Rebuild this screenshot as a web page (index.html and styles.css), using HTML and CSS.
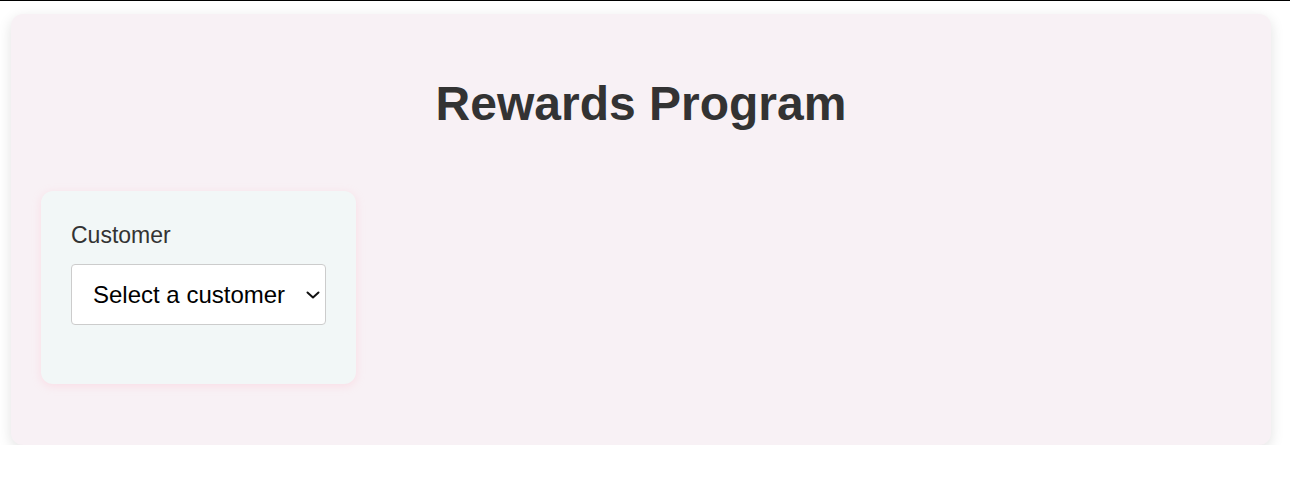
FILE: index.html
```html
<!DOCTYPE html>
<html lang="en">
<head>
<meta charset="utf-8">
<title>Rewards Program</title>
<link rel="stylesheet" href="styles.css">
</head>
<body>
<div class="topline"></div>
<main class="app">
  <h1 class="title">Rewards Program</h1>
  <section class="card">
    <div class="field">
      <label class="label" for="customer">Customer</label>
      <div class="select-wrap">
        <select id="customer" class="select">
          <option>Select a customer</option>
        </select>
        <svg class="chevron" width="14" height="8" viewBox="0 0 14 8" aria-hidden="true">
          <path d="M1.5 1.5 L7 6.5 L12.5 1.5" fill="none" stroke="#111111" stroke-width="2" stroke-linecap="round" stroke-linejoin="round"/>
        </svg>
      </div>
    </div>
  </section>
</main>
</body>
</html>
```

FILE: styles.css
```css
html, body {
  margin: 0;
  padding: 0;
  background: #ffffff;
}
body {
  font-family: "Liberation Sans", Arial, sans-serif;
  color: #333333;
}
.topline {
  height: 1px;
  background: #000000;
}
.app {
  margin: 13px 19px 0 11px;
  padding: 30px;
  background: #f8f1f5;
  border-radius: 12px;
  box-shadow: 0 4px 14px rgba(0, 0, 0, 0.12);
  display: flex;
  flex-direction: column;
  align-items: flex-start;
}
.title {
  align-self: stretch;
  text-align: center;
  font-size: 48px;
  font-weight: bold;
  color: #333333;
  margin: 32px 0 60px;
  line-height: 55px;
}
.card {
  width: 255px;
  padding: 30px;
  background: #f2f7f7;
  border-radius: 12px;
  box-shadow: 0 2px 8px rgba(255, 182, 200, 0.35);
  margin-bottom: 31px;
}
.field {
  display: flex;
  flex-direction: column;
  gap: 16px;
  margin-bottom: 29px;
}
.label {
  padding-top: 2px;
  font-size: 23px;
  line-height: 25px;
  color: #333333;
}
.select-wrap {
  position: relative;
}
.select {
  display: block;
  width: 100%;
  height: 61px;
  padding: 0 30px 0 21px;
  -webkit-appearance: none;
  appearance: none;
  font-family: "Liberation Sans", Arial, sans-serif;
  font-size: 24px;
  color: #000000;
  background: #ffffff;
  border: 1px solid #cccccc;
  border-radius: 4px;
}
.chevron {
  position: absolute;
  right: 6px;
  top: 27px;
  pointer-events: none;
}
```
